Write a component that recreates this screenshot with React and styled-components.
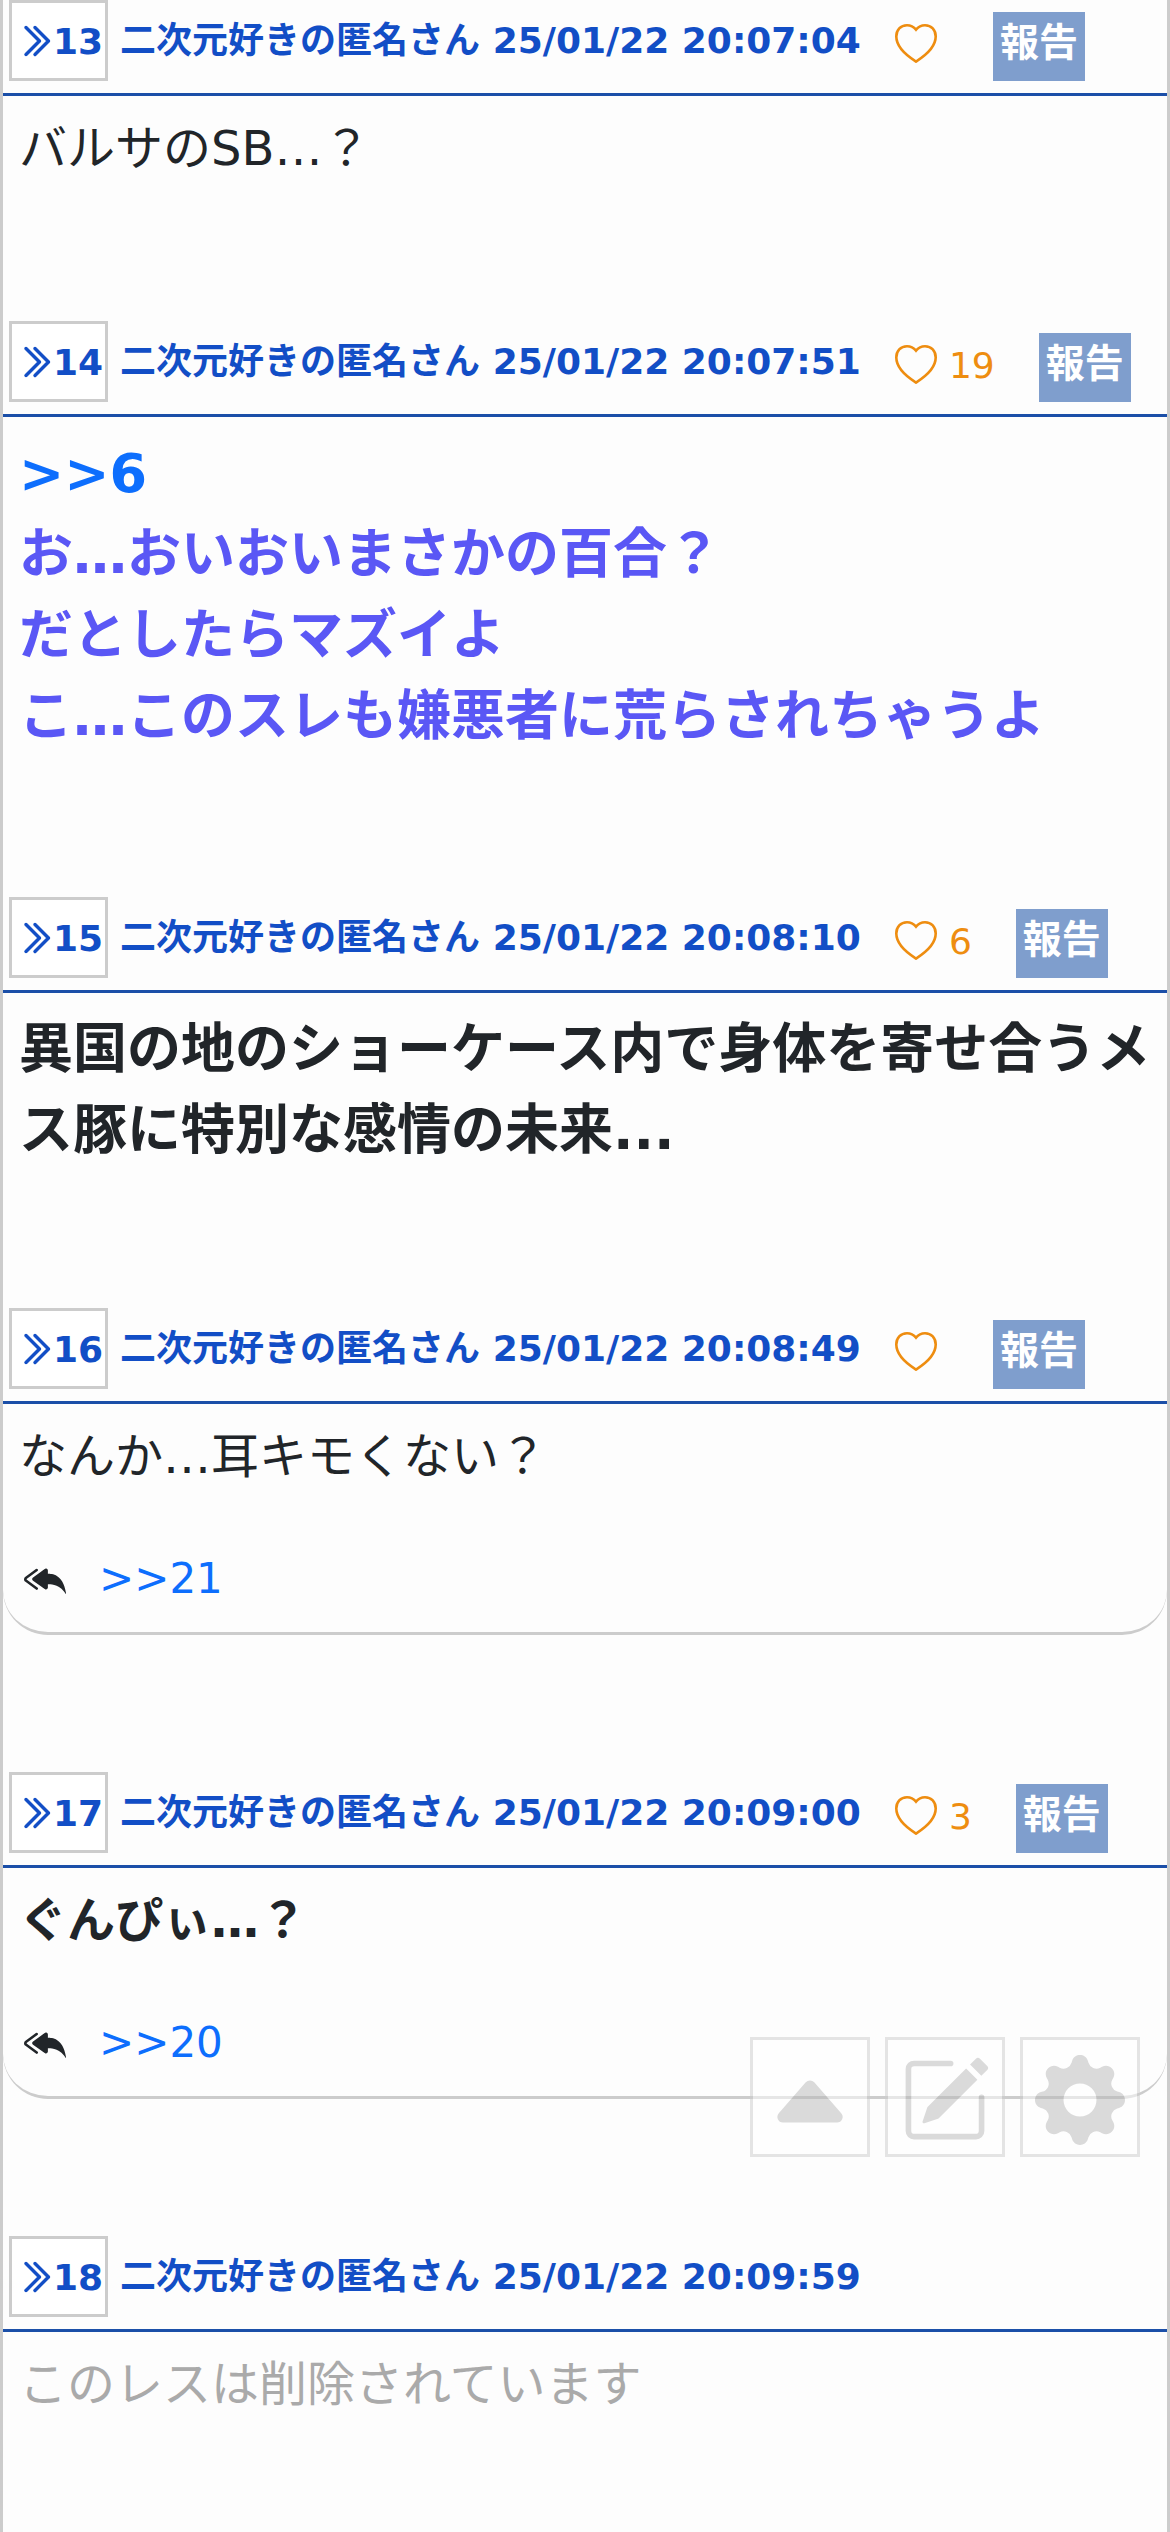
import React from "react";
import styled, { createGlobalStyle } from "styled-components";
import {
  BsChevronDoubleRight,
  BsReplyAllFill,
  BsCaretUpFill,
  BsPencilSquare,
  BsGearFill,
} from "react-icons/bs";

const GlobalStyle = createGlobalStyle`
  *, *::before, *::after { box-sizing: border-box; }
  body {
    margin: 0;
    background: #fdfdfd;
    color: #212529;
    font-family: "DejaVu Sans", "Noto Sans CJK JP", sans-serif;
  }
`;

const Thread = styled.main`
  min-height: 100vh;
  border: solid #ccc;
  border-width: 0 3px;
`;

const Post = styled.article`
  padding-bottom: ${(p) => p.$gap}px;
`;

const PostHeader = styled.header`
  display: flex;
  align-items: stretch;
  height: 96px;
  padding: 0 6px 12px;
  border-bottom: 3px solid #1b4fa8;
  color: #124ec6;
  font-size: 36px;
  font-weight: bold;
  line-height: 54px;
  white-space: nowrap;
`;

const NumberLink = styled.a`
  display: flex;
  align-items: flex-start;
  padding: 19px 2px 0 5px;
  border: 3px solid #ccc;
  background: #fff;
  color: inherit;
  line-height: 40px;
  text-decoration: none;

  svg {
    width: 36px;
    height: 36px;
    margin-top: 1px;
    stroke: currentColor;
    stroke-width: 0.5px;
  }
`;

const Author = styled.span`
  padding: 14px 0 0 12px;
`;

const Like = styled.button`
  display: flex;
  align-items: flex-start;
  gap: 12px;
  margin: 0 44px 0 34px;
  padding: 24px 0 0;
  border: 0;
  background: none;
  color: #ee8d10;
  font: inherit;
  font-weight: normal;
  line-height: 42px;

  svg {
    width: 42px;
    height: 39px;
  }
`;

const Report = styled.button`
  align-self: flex-end;
  height: 69px;
  padding: 0 7px 7px;
  border: 0;
  background: #7f9ecd;
  color: #fff;
  font: inherit;
  font-size: 39px;
  line-height: 60px;
`;

const Body = styled.div`
  padding: 16px 14px 0 16px;
  border-bottom: ${(p) => (p.$replies ? "3px solid #ccc" : "0")};
  border-radius: 0 0 45px 45px;
`;

const Text = styled.p`
  margin: 0;
  color: ${(p) => p.$color || "inherit"};
  font-size: ${(p) => (p.$large ? 54 : 48)}px;
  line-height: ${(p) => (p.$large ? 81 : 72)}px;
  font-weight: ${(p) => (p.$bold ? "bold" : "normal")};
`;

const QuoteLink = styled.a`
  color: #0d6efd;
  text-decoration: none;
`;

const Replies = styled.div`
  display: flex;
  align-items: center;
  gap: 33px;
  padding: 51px 5px 17px;
  font-size: 42px;
  line-height: 72px;

  svg {
    width: 42px;
    height: 42px;
  }
`;

const Tools = styled.nav`
  position: fixed;
  right: 30px;
  bottom: 375px;
  display: flex;
  gap: 15px;
  opacity: 0.5;
`;

const ToolButton = styled.button`
  width: 120px;
  height: 120px;
  padding: 15px 12px 9px;
  border: 3px solid #ccc;
  background: #fff;
  color: #b7b7b7;

  svg {
    display: block;
    width: 90px;
    height: 90px;
  }
`;

function Heart() {
  return (
    <svg viewBox="0 0 42 39" fill="none" stroke="currentColor" strokeWidth="2.6" aria-hidden="true">
      <path d="M21 5.6C18.5 2.6 15.6 1.3 12 1.3 5.6 1.3 1.3 6 1.3 12.6 1.3 22 9.5 30.4 21 37.6 32.5 30.4 40.7 22 40.7 12.6 40.7 6 36.4 1.3 30 1.3 26.4 1.3 23.5 2.6 21 5.6Z" />
    </svg>
  );
}

const posts = [
  { no: 13, time: "20:07:04", likes: "", lines: ["バルサのSB…？"], gap: 137 },
  {
    no: 14,
    time: "20:07:51",
    likes: "19",
    quote: 6,
    lines: ["お…おいおいまさかの百合？", "だとしたらマズイよ", "こ…このスレも嫌悪者に荒らされちゃうよ"],
    bold: true,
    large: true,
    color: "#5a57f5",
    gap: 140,
  },
  {
    no: 15,
    time: "20:08:10",
    likes: "6",
    lines: ["異国の地のショーケース内で身体を寄せ合うメス豚に特別な感情の未来..."],
    bold: true,
    large: true,
    gap: 137,
  },
  { no: 16, time: "20:08:49", likes: "", lines: ["なんか…耳キモくない？"], reply: 21, gap: 137 },
  { no: 17, time: "20:09:00", likes: "3", lines: ["ぐんぴぃ…？"], bold: true, reply: 20, gap: 137 },
  { no: 18, time: "20:09:59", deleted: true, lines: ["このレスは削除されています"], color: "#aaa", gap: 15 },
];

export default function App() {
  return (
    <>
      <GlobalStyle />
      <Thread lang="ja">
        {posts.map((post) => (
          <Post key={post.no} id={`res${post.no}`} $gap={post.gap}>
            <PostHeader>
              <NumberLink href={`#res${post.no}`}>
                <BsChevronDoubleRight aria-hidden="true" />
                {post.no}
              </NumberLink>
              <Author>二次元好きの匿名さん 25/01/22 {post.time}</Author>
              {!post.deleted && (
                <>
                  <Like type="button" aria-label="いいね">
                    <Heart />
                    <span>{post.likes}</span>
                  </Like>
                  <Report type="button">報告</Report>
                </>
              )}
            </PostHeader>
            <Body $replies={Boolean(post.reply)}>
              <Text $bold={post.bold} $large={post.large} $color={post.color}>
                {post.quote && (
                  <>
                    <QuoteLink href={`#res${post.quote}`}>&gt;&gt;{post.quote}</QuoteLink>
                    <br />
                  </>
                )}
                {post.lines.map((line, i) => (
                  <React.Fragment key={line}>
                    {i > 0 && <br />}
                    {line}
                  </React.Fragment>
                ))}
              </Text>
              {post.reply && (
                <Replies>
                  <BsReplyAllFill aria-hidden="true" />
                  <QuoteLink href={`#res${post.reply}`}>&gt;&gt;{post.reply}</QuoteLink>
                </Replies>
              )}
            </Body>
          </Post>
        ))}
      </Thread>
      <Tools aria-label="ツール">
        <ToolButton type="button" aria-label="上へ">
          <BsCaretUpFill />
        </ToolButton>
        <ToolButton type="button" aria-label="書き込む">
          <BsPencilSquare />
        </ToolButton>
        <ToolButton type="button" aria-label="設定">
          <BsGearFill />
        </ToolButton>
      </Tools>
    </>
  );
}
